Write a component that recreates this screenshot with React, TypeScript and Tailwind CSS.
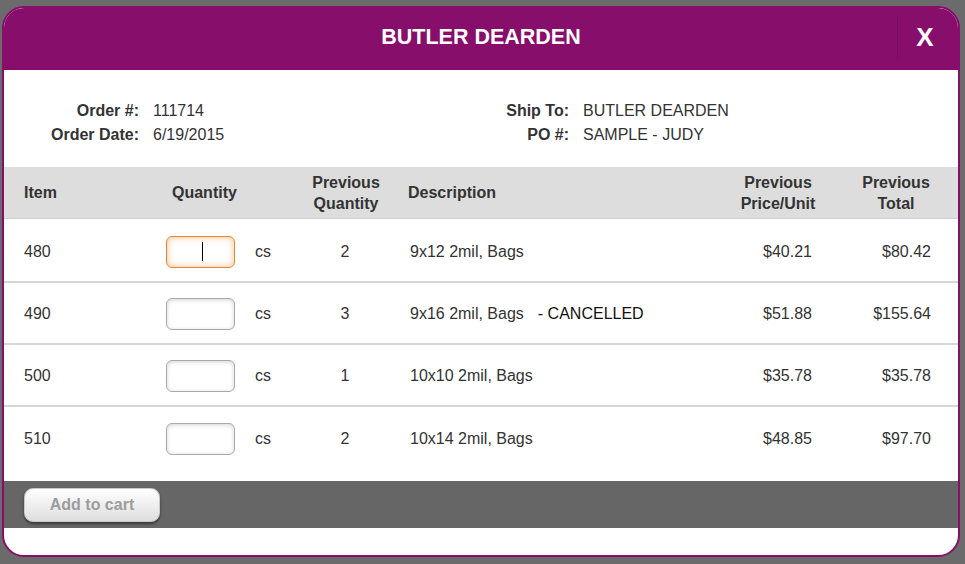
import React from "react";

type Line = {
  item: string;
  prevQty: string;
  desc: string;
  note?: string;
  price: string;
  total: string;
  focused?: boolean;
};

const lines: Line[] = [
  { item: "480", prevQty: "2", desc: "9x12 2mil, Bags", price: "$40.21", total: "$80.42", focused: true },
  { item: "490", prevQty: "3", desc: "9x16 2mil, Bags", note: "- CANCELLED", price: "$51.88", total: "$155.64" },
  { item: "500", prevQty: "1", desc: "10x10 2mil, Bags", price: "$35.78", total: "$35.78" },
  { item: "510", prevQty: "2", desc: "10x14 2mil, Bags", price: "$48.85", total: "$97.70" },
];

const cols = "grid grid-cols-[146px_140px_110px_320px_116px_122px]";

function QtyInput({ focused }: { focused?: boolean }) {
  return (
    <div className="relative">
      <div
        className={
          focused
            ? "w-[69px] h-[32px] rounded-[6px] border border-[#e8862a] bg-white shadow-[inset_0_0_7px_rgba(232,134,42,0.55)]"
            : "w-[69px] h-[32px] rounded-[6px] border border-[#a9a9a9] bg-white shadow-[inset_0_1px_4px_rgba(0,0,0,0.18)]"
        }
      />
      {focused && <div className="absolute left-[36px] top-[6px] w-[1px] h-[19px] bg-black" />}
    </div>
  );
}

export default function App() {
  return (
    <div className="w-[965px] h-[564px] bg-[#6b6b6b] overflow-hidden font-['Liberation_Sans',Arial,sans-serif] text-[#333]">
      <div className="ml-[2px] mt-[6px] w-[958px] h-[551px] rounded-[22px] border-2 border-[#870e6b] bg-white overflow-hidden flex flex-col">
        {/* title bar */}
        <div className="h-[62px] bg-[#870e6b] flex items-center relative">
          <div className="flex-1 text-center text-white font-bold text-[21.5px] pb-[3px]">BUTLER DEARDEN</div>
          <div className="absolute right-0 top-[8px] h-[42px] w-[61px] border-l border-[#7a0c60] flex items-center justify-center pr-[6px] text-white font-bold text-[26px]">
            X
          </div>
        </div>

        {/* order info */}
        <div className="h-[97px] pt-[29px] flex text-[16px] leading-6">
          <div className="w-[476px] flex gap-[14px]">
            <div className="w-[135px] text-right font-bold">
              <div>Order #:</div>
              <div>Order Date:</div>
            </div>
            <div>
              <div>111714</div>
              <div>6/19/2015</div>
            </div>
          </div>
          <div className="flex gap-[14px]">
            <div className="w-[89px] text-right font-bold">
              <div>Ship To:</div>
              <div>PO #:</div>
            </div>
            <div>
              <div>BUTLER DEARDEN</div>
              <div>SAMPLE - JUDY</div>
            </div>
          </div>
        </div>

        {/* table header */}
        <div className={`${cols} h-[52px] bg-[#dddddd] border-b border-[#cfcfcf] font-bold text-[16px] leading-[21px] items-center`}>
          <div className="pl-[20px]">Item</div>
          <div className="pl-[22px]">Quantity</div>
          <div className="text-center pl-[2px]">Previous<br />Quantity</div>
          <div className="pl-[8px]">Description</div>
          <div className="text-center">Previous<br />Price/Unit</div>
          <div className="text-center pr-[2px]">Previous<br />Total</div>
        </div>

        {/* rows */}
        <div className="pt-[2px]">
          {lines.map((l, i) => (
            <div
              key={l.item}
              className={`${cols} h-[62px] pt-[1px] items-center text-[16px] ${i < lines.length - 1 ? "border-b-2 border-[#d6d6d6]" : ""}`}
            >
              <div className="pl-[20px]">{l.item}</div>
              <div className="pl-[16px] flex items-center gap-[20px]">
                <QtyInput focused={l.focused} />
                <span>cs</span>
              </div>
              <div className="text-center">{l.prevQty}</div>
              <div className="pl-[10px]">
                {l.desc}
                {l.note && <span className="ml-[14px] text-[#111]">{l.note}</span>}
              </div>
              <div className="text-right pr-[24px]">{l.price}</div>
              <div className="text-right pr-[27px]">{l.total}</div>
            </div>
          ))}
        </div>

        <div className="flex-1 max-h-[14px]" />

        {/* footer */}
        <div className="h-[47px] mt-auto bg-[#666666] flex items-center pl-[20px]">
          <button className="w-[136px] h-[34px] rounded-[9px] bg-gradient-to-b from-white to-[#dedede] border border-[#c8c8c8] shadow-[0_2px_3px_rgba(0,0,0,0.45)] text-[#9c9c9c] font-bold text-[16px]">
            Add to cart
          </button>
        </div>
        <div className="h-[27px] shrink-0" />
      </div>
    </div>
  );
}
